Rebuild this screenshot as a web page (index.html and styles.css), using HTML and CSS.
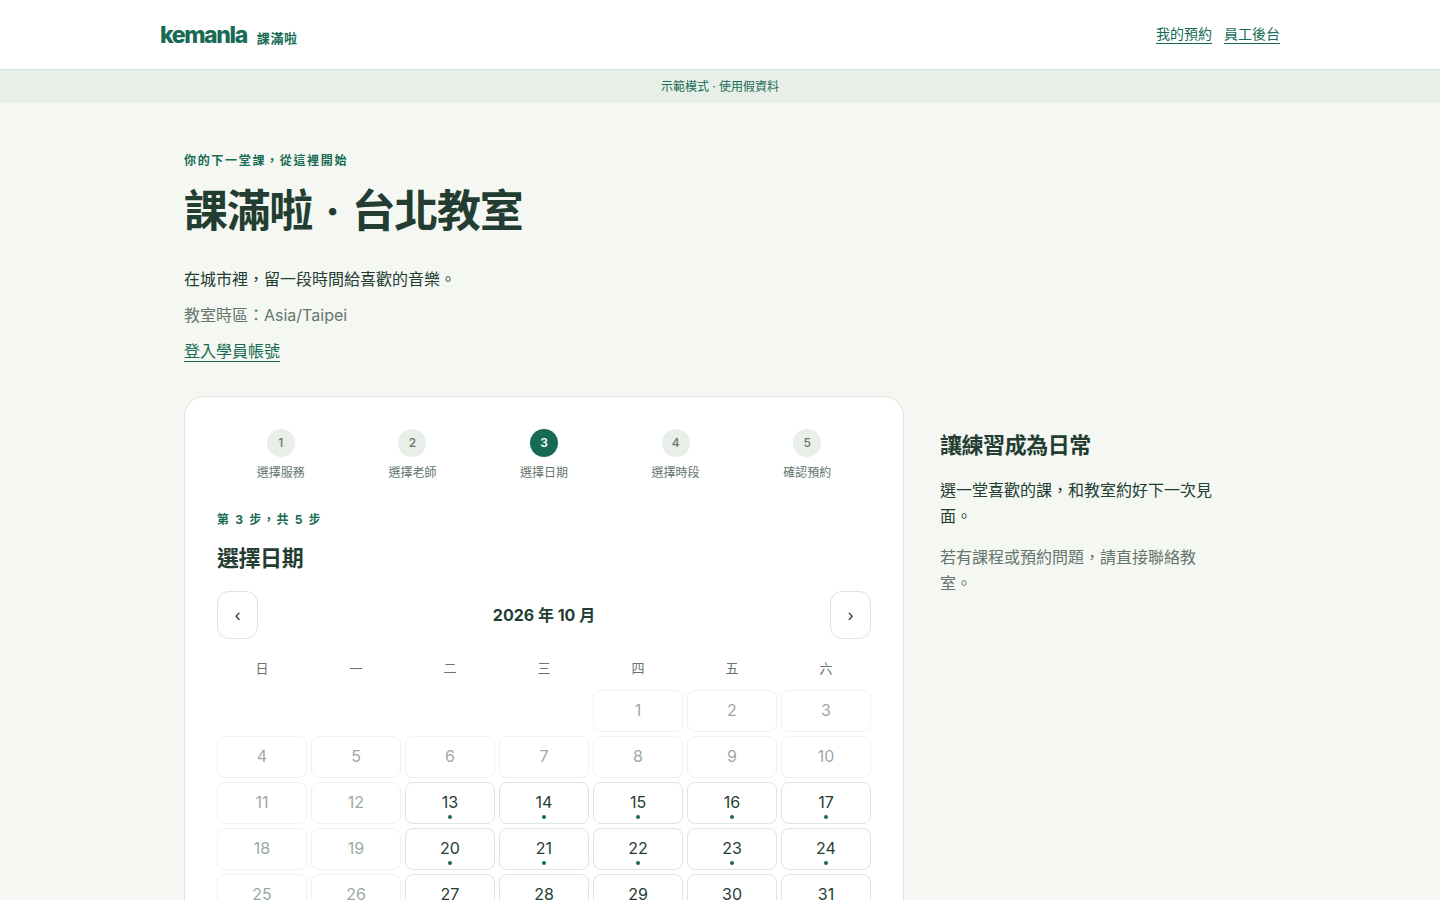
FILE: index.html
```html
<!DOCTYPE html>
<html lang="zh-Hant">
<head>
    <meta charset="utf-8">
    <meta name="viewport" content="width=device-width, initial-scale=1">
    <title>課滿啦 · 台北教室</title>
    <link rel="stylesheet" href="styles.css">
</head>
<body>
    <header class="site-header">
        <div class="header-inner">
            <a class="brand" href="#"><span class="brand-name">kemanla</span><span class="brand-zh">課滿啦</span></a>
            <nav class="site-nav">
                <a href="#">我的預約</a>
                <a href="#">員工後台</a>
            </nav>
        </div>
    </header>
    <div class="demo-banner">示範模式 · 使用假資料</div>

    <main class="page">
        <section class="intro">
            <p class="eyebrow">你的下一堂課，從這裡開始</p>
            <h1>課滿啦 <span class="dot">·</span> 台北教室</h1>
            <p>在城市裡，留一段時間給喜歡的音樂。</p>
            <p class="muted">教室時區：Asia/Taipei</p>
            <p><a href="#">登入學員帳號</a></p>
        </section>

        <div class="layout">
            <section class="card">
                <ol class="steps">
                    <li><span class="num">1</span>選擇服務</li>
                    <li><span class="num">2</span>選擇老師</li>
                    <li class="active"><span class="num">3</span>選擇日期</li>
                    <li><span class="num">4</span>選擇時段</li>
                    <li><span class="num">5</span>確認預約</li>
                </ol>

                <p class="eyebrow">第 3 步，共 5 步</p>
                <h2>選擇日期</h2>

                <div class="month-nav">
                    <button type="button" aria-label="上個月">‹</button>
                    <strong>2026 年 10 月</strong>
                    <button type="button" aria-label="下個月">›</button>
                </div>

                <div class="weekdays">
                    <span>日</span><span>一</span><span>二</span><span>三</span><span>四</span><span>五</span><span>六</span>
                </div>

                <!-- 2026/10/1 是星期四 -->
                <div class="days">
                    <button type="button" class="first" disabled>1</button>
                    <button type="button" disabled>2</button>
                    <button type="button" disabled>3</button>
                    <button type="button" disabled>4</button>
                    <button type="button" disabled>5</button>
                    <button type="button" disabled>6</button>
                    <button type="button" disabled>7</button>
                    <button type="button" disabled>8</button>
                    <button type="button" disabled>9</button>
                    <button type="button" disabled>10</button>
                    <button type="button" disabled>11</button>
                    <button type="button" disabled>12</button>
                    <button type="button">13</button>
                    <button type="button">14</button>
                    <button type="button">15</button>
                    <button type="button">16</button>
                    <button type="button">17</button>
                    <button type="button" disabled>18</button>
                    <button type="button" disabled>19</button>
                    <button type="button">20</button>
                    <button type="button">21</button>
                    <button type="button">22</button>
                    <button type="button">23</button>
                    <button type="button">24</button>
                    <button type="button" disabled>25</button>
                    <button type="button" disabled>26</button>
                    <button type="button">27</button>
                    <button type="button">28</button>
                    <button type="button">29</button>
                    <button type="button">30</button>
                    <button type="button">31</button>
                </div>
            </section>

            <aside class="side">
                <h2>讓練習成為日常</h2>
                <p>選一堂喜歡的課，和教室約好下一次見面。</p>
                <p class="muted">若有課程或預約問題，請直接聯絡教室。</p>
            </aside>
        </div>
    </main>
</body>
</html>
```
FILE: styles.css
```css
:root {
    --ink: #243d33;
    --green: #176b55;
    --muted: #66756d;
    --soft: #e7efe8;
    --line: #dce5df;
    --bg: #f4f7f2;
}
* {
    box-sizing: border-box;
}
body {
    margin: 0;
    background: var(--bg);
    color: var(--ink);
    font-family: Inter, "Noto Sans CJK TC", sans-serif;
    font-size: 16px;
    line-height: 26px;
}
h1, h2, p {
    margin: 0;
}
a {
    color: var(--green);
    text-underline-offset: 4px;
}
button {
    font: inherit;
    color: inherit;
    background: #fff;
    border: 1px solid var(--line);
    cursor: pointer;
}

/* header */
.site-header {
    background: #fff;
    border-bottom: 1px solid #d5e3dc;
}
.header-inner {
    max-width: 1120px;
    margin: 0 auto;
    padding: 18px 0 14px;
    display: flex;
    justify-content: space-between;
    align-items: flex-start;
}
.brand {
    display: flex;
    align-items: baseline;
    gap: 10px;
    line-height: 34px;
    font-weight: 700;
    text-decoration: none;
}
.brand-name {
    font-size: 23px;
    font-weight: 800;
    letter-spacing: -0.06em;
}
.brand-zh {
    font-size: 13px;
    letter-spacing: 0.05em;
}
.site-nav {
    display: flex;
    gap: 12px;
    font-size: 14px;
    line-height: 32px;
}
.demo-banner {
    padding: 7px 16px;
    background: var(--soft);
    color: var(--green);
    font-size: 12px;
    line-height: 19px;
    text-align: center;
}

/* page */
.page {
    max-width: 1120px;
    margin: 0 auto;
    padding: 48px 24px;
}
.eyebrow {
    color: var(--green);
    font-size: 12px;
    font-weight: 700;
    line-height: 20px;
    letter-spacing: 0.14em;
}
.muted {
    color: var(--muted);
}
.intro h1 {
    margin: 13px 0 28px;
    font-size: 44px;
    line-height: 54px;
    letter-spacing: -0.03em;
}
h1 .dot {
    margin: 0 4px;
}
h2 {
    font-size: 22px;
    line-height: 26px;
    letter-spacing: -0.02em;
}
.intro p + p {
    margin-top: 10px;
}
.layout {
    display: grid;
    grid-template-columns: minmax(0, 720px) minmax(0, 352px);
    align-items: start;
    margin-top: 32px;
}
.card {
    padding: 32px;
    background: #fff;
    border: 1px solid var(--line);
    border-radius: 20px;
}

/* steps */
.steps {
    display: grid;
    grid-template-columns: repeat(5, 1fr);
    gap: 4px;
    margin: 0 0 27px;
    padding: 0;
    list-style: none;
    color: var(--muted);
    font-size: 12px;
    line-height: 20px;
}
.steps li {
    display: flex;
    flex-direction: column;
    align-items: center;
    gap: 6px;
}
.num {
    width: 28px;
    height: 28px;
    border-radius: 50%;
    background: var(--soft);
    line-height: 28px;
    font-weight: 500;
    text-align: center;
}
.active .num {
    background: var(--green);
    color: #fff;
    font-weight: 600;
}

/* calendar */
.card h2 {
    margin: 15px 0 20px;
}
.month-nav {
    display: flex;
    justify-content: space-between;
    align-items: center;
}
.month-nav button {
    width: 41px;
    height: 48px;
    padding: 0;
    border-radius: 12px;
}
.weekdays, .days {
    display: grid;
    grid-template-columns: repeat(7, 1fr);
    gap: 4px;
}
.weekdays {
    margin: 19px 0 11px;
    color: var(--muted);
    font-size: 13px;
    line-height: 21px;
    text-align: center;
}
.days button {
    position: relative;
    height: 42px;
    padding: 0 0 2px;
    border-radius: 8px;
}
.days .first {
    grid-column-start: 5;
}
.days button:disabled {
    opacity: 0.45;
    cursor: default;
}
.days button:enabled::after {
    content: "";
    position: absolute;
    left: 50%;
    bottom: 4px;
    width: 4px;
    height: 4px;
    margin-left: -2px;
    border-radius: 50%;
    background: var(--green);
}

/* aside */
.side {
    padding: 36px;
}
.side h2 {
    margin-bottom: 19px;
}
.side p + p {
    margin-top: 15px;
}
```
